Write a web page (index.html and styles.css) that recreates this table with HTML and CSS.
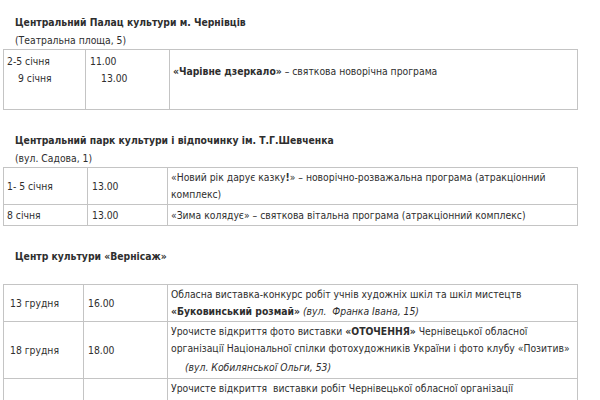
FILE: index.html
```html
<!DOCTYPE html>
<html lang="uk">
<head>
<meta charset="utf-8">
<title>Афіша</title>
<link rel="stylesheet" href="styles.css">
</head>
<body>
<div class="page">
  <h3 class="venue">Центральний Палац культури м. Чернівців</h3>
  <p class="addr">(Театральна площа, 5)</p>
  <table class="grid t1">
    <tr>
      <td class="c1 top"><div>2-5 січня</div><div class="ind">9 січня</div></td>
      <td class="c2 top"><div>11.00</div><div class="ind">13.00</div></td>
      <td class="c3 lifted"><b>«Чарівне дзеркало»</b> – святкова новорічна програма</td>
    </tr>
  </table>

  <h3 class="venue">Центральний парк культури і відпочинку ім. Т.Г.Шевченка</h3>
  <p class="addr">(вул. Садова, 1)</p>
  <table class="grid t2">
    <tr>
      <td class="c1">1- 5 січня</td>
      <td class="c2">13.00</td>
      <td class="c3">«Новий рік дарує казку<b>!</b>» – новорічно-розважальна програма (атракціонний комплекс)</td>
    </tr>
    <tr>
      <td class="c1 one">8 січня</td>
      <td class="c2 one">13.00</td>
      <td class="c3 one">«Зима колядує» – святкова вітальна програма (атракціонний комплекс)</td>
    </tr>
  </table>

  <h3 class="venue gap">Центр культури «Вернісаж»</h3>
  <table class="grid t3">
    <tr>
      <td class="c1">13 грудня</td>
      <td class="c2">16.00</td>
      <td class="c3">Обласна виставка-конкурс робіт учнів художніх шкіл та шкіл мистецтв <b>«Буковинський розмай»</b> <i>(вул.&nbsp; Франка Івана, 15)</i></td>
    </tr>
    <tr>
      <td class="c1">18 грудня</td>
      <td class="c2">18.00</td>
      <td class="c3">Урочисте відкриття фото виставки <b>«ОТОЧЕННЯ»</b> Чернівецької обласної організації Національної спілки фотохудожників України і фото клубу «Позитив»<div class="note"><i>(вул. Кобилянської Ольги, 53)</i></div></td>
    </tr>
    <tr>
      <td class="c1">&nbsp;</td>
      <td class="c2">&nbsp;</td>
      <td class="c3">Урочисте відкриття&nbsp; виставки робіт Чернівецької обласної організації Національної спілки художників України</td>
    </tr>
  </table>
</div>
</body>
</html>
```

FILE: styles.css
```css
html, body {
  margin: 0;
  padding: 0;
  background: #ffffff;
}

body {
  font-family: "DejaVu Sans Condensed", "DejaVu Sans", Verdana, sans-serif;
  font-stretch: condensed;
  font-size: 10.3px;
  line-height: 17px;
  color: #2e2e2e;
}

.page {
  padding: 13px 0 0 3px;
}

.venue {
  margin: 0 0 0 12px;
  font-size: 10.3px;
  font-weight: bold;
  line-height: 18px;
}

.addr {
  margin: 0 0 0 12px;
  line-height: 18px;
}

.gap {
  margin-bottom: 19px;
}

.grid {
  width: 575px;
  border-collapse: collapse;
  table-layout: fixed;
  margin-bottom: 21px;
}

.grid td {
  box-sizing: border-box;
  border: 1px solid #c4c4c4;
  padding: 1px 4px 1px 3px;
  vertical-align: middle;
}

.t1 .c1 { width: 82px; }
.t1 .c2 { width: 84px; }
.t2 .c1 { width: 84px; }
.t2 .c2 { width: 80px; }
.t3 .c1 { width: 80px; }
.t3 .c2 { width: 84px; }

.grid .c2 { padding-left: 4px; }
.grid .c3 { padding-left: 3px; }
.t3 .c1 { padding-left: 6px; }

.grid td.top {
  vertical-align: top;
  padding-top: 3px;
  padding-bottom: 22px;
}

.grid td.lifted {
  padding-bottom: 18px;
}

.grid td.one {
  padding-top: 2px;
  padding-bottom: 1px;
}

.ind {
  padding-left: 11px;
}

.note {
  line-height: 20px;
  padding-left: 14px;
}
```
